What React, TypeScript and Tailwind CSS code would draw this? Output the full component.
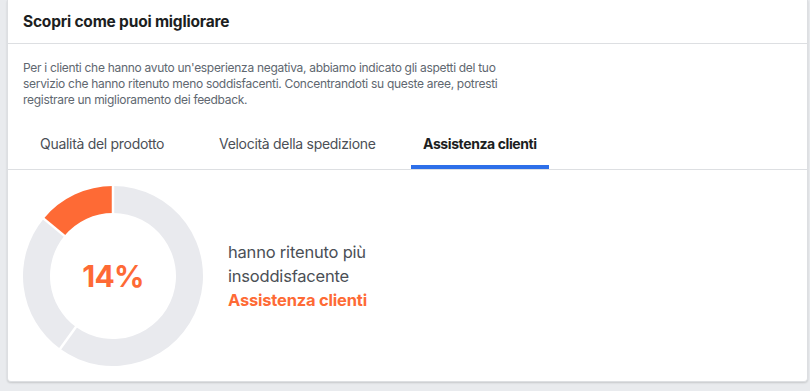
import React from 'react'

const ORANGE = '#fe6a35'

function polar(cx: number, cy: number, r: number, deg: number) {
  const rad = ((deg - 90) * Math.PI) / 180
  return [cx + r * Math.cos(rad), cy + r * Math.sin(rad)]
}

function sector(cx: number, cy: number, ro: number, ri: number, a0: number, a1: number) {
  const large = a1 - a0 > 180 ? 1 : 0
  const [x0, y0] = polar(cx, cy, ro, a0)
  const [x1, y1] = polar(cx, cy, ro, a1)
  const [x2, y2] = polar(cx, cy, ri, a1)
  const [x3, y3] = polar(cx, cy, ri, a0)
  return `M${x0} ${y0} A${ro} ${ro} 0 ${large} 1 ${x1} ${y1} L${x2} ${y2} A${ri} ${ri} 0 ${large} 0 ${x3} ${y3} Z`
}

function Donut() {
  const segs = [
    { from: 0, to: 216, color: '#e9eaee' },
    { from: 216, to: 309.6, color: '#e9eaee' },
    { from: 309.6, to: 360, color: ORANGE },
  ]
  return (
    <div className="relative w-[180px] h-[180px] shrink-0">
      <svg width="180" height="180" viewBox="0 0 180 180">
        {segs.map((s, i) => (
          <path key={i} d={sector(90, 90, 90, 63, s.from, s.to)} fill={s.color} />
        ))}
        {segs.map((s, i) => {
          const [xa, ya] = polar(90, 90, 61, s.from)
          const [xb, yb] = polar(90, 90, 92, s.from)
          return <line key={i} x1={xa} y1={ya} x2={xb} y2={yb} stroke="#fff" strokeWidth="2.5" />
        })}
      </svg>
      <div className="absolute inset-0 flex items-center justify-center">
        <span className="text-[30px] font-bold text-[#fe6a35] tracking-tight">14%</span>
      </div>
    </div>
  )
}

export default function App() {
  // widths/margins taken from the design so the tabs line up
  const tabs = [
    { label: 'Qualità del prodotto', cls: 'w-[144px]' },
    { label: 'Velocità della spedizione', cls: 'w-[174px] ml-[35px]' },
    { label: 'Assistenza clienti', cls: 'w-[138px] ml-[30px]' },
  ]
  const active = 2

  return (
    <div
      className="min-h-screen bg-[#e9ebee] pl-[7px] pr-[2px]"
      style={{ fontFamily: 'Inter, "Noto Sans", sans-serif' }}
    >
      <div className="bg-white border border-t-0 border-[#dddfe2] rounded-b-[4px] shadow-[0_1px_2px_rgba(0,0,0,0.15)]">
        {/* Header */}
        <div className="h-[44px] flex items-center px-[15px] border-b border-[#dddfe2]">
          <h2 className="text-[15.5px] font-bold text-[#1c1e21] tracking-[-0.2px]">
            Scopri come puoi migliorare
          </h2>
        </div>

        {/* Description */}
        <div className="px-[15px] pt-[16px]">
          <p className="text-[12px] leading-[16px] text-[#606770] tracking-[-0.3px] whitespace-nowrap">
            Per i clienti che hanno avuto un'esperienza negativa, abbiamo indicato gli aspetti del tuo
            <br />
            servizio che hanno ritenuto meno soddisfacenti. Concentrandoti su queste aree, potresti
            <br />
            registrare un miglioramento dei feedback.
          </p>
        </div>

        {/* Tabs */}
        <div className="flex pl-[20px] pt-[26px] border-b border-[#dddfe2]">
          {tabs.map((t, i) => (
            <div
              key={t.label}
              className={
                i === active
                  ? `${t.cls} px-3 pb-[11px] border-b-4 border-[#2d6fe9] text-[14px] leading-[20px] font-bold text-[#1c1e21] tracking-[-0.4px] whitespace-nowrap`
                  : `${t.cls} px-3 pb-[11px] border-b-4 border-transparent text-[14px] leading-[20px] text-[#4b4f56] tracking-[-0.3px] whitespace-nowrap`
              }
            >
              {t.label}
            </div>
          ))}
        </div>

        {/* Chart */}
        <div className="flex items-center px-[15px] pt-[16px] pb-[15px] gap-[25px]">
          <Donut />
          <div className="text-[16.5px] leading-[24px] text-[#4b4f56] tracking-[-0.2px]">
            <div>hanno ritenuto più</div>
            <div>insoddisfacente</div>
            <div className="font-bold text-[#fe6a35]">Assistenza clienti</div>
          </div>
        </div>
      </div>
    </div>
  )
}
